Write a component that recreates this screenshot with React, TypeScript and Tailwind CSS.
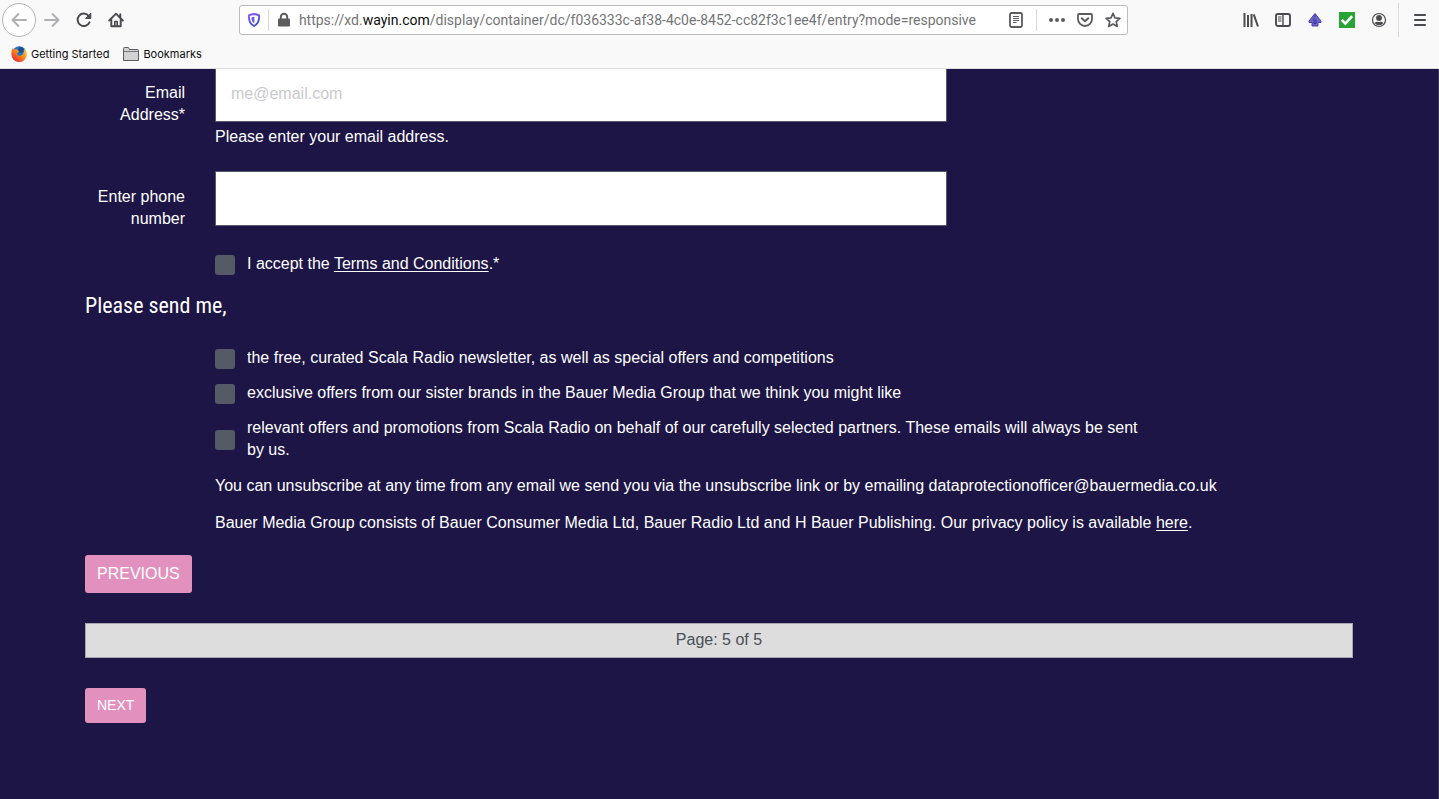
import type { ReactNode } from "react";

function ToolButton({ label, children }: { label: string; children: ReactNode }) {
  return (
    <button type="button" aria-label={label} className="flex h-8 w-8 shrink-0 items-center justify-center text-[#4a4a4f]">
      {children}
    </button>
  );
}

const icon = {
  width: 16,
  height: 16,
  viewBox: "0 0 16 16",
  fill: "none",
  stroke: "currentColor",
  strokeWidth: 2,
  strokeLinecap: "round" as const,
  strokeLinejoin: "round" as const,
  "aria-hidden": true,
};

function BrowserToolbar() {
  return (
    <div className="flex h-10 items-center">
      <nav aria-label="Navigation" className="flex items-center pl-0.5">
        <button
          type="button"
          aria-label="Back"
          className="flex h-[34px] w-[34px] items-center justify-center rounded-full border border-[#b4b4b4] bg-white text-[#b0b0b2]"
        >
          <svg {...icon}><path d="M15 8H1.5M7.5 2l-6 6 6 6" /></svg>
        </button>
        <button type="button" aria-label="Forward" className="flex h-8 w-8 items-center justify-center text-[#b0b0b2]">
          <svg {...icon}><path d="M1 8h13.5M8.500 2l6 6-6 6" /></svg>
        </button>
        <ToolButton label="Reload">
          <svg {...icon}>
            <path d="M13.500 10.300A6.200 6.200 0 1 1 12.600 3.800" />
            <path d="M14.800 1.500v5H10z" fill="currentColor" strokeWidth="1" />
          </svg>
        </ToolButton>
        <ToolButton label="Home">
          <svg {...icon}>
            <path d="M1.200 8.500L8 1.700l6.800 6.800M3.300 7v7.200h9.400V7M12.300 2.300v3" strokeWidth="1.900" />
            <path d="M6.800 14V9.500h2.400V14" strokeWidth="1.600" />
          </svg>
        </ToolButton>
      </nav>
      <div className="flex-1" />
      <div className="flex h-[30px] flex-[8.300] items-center rounded-[3px] border border-[#bcbcbd] bg-white text-[#5c5c5f]">
        <button type="button" aria-label="Tracking protection" className="flex w-7 shrink-0 items-center justify-center">
          <svg width="14" height="14" viewBox="0 0 14 14" fill="none" aria-hidden="true">
            <defs>
              <linearGradient id="shield" x1="1" y1="1" x2="9" y2="14" gradientUnits="userSpaceOnUse">
                <stop stopColor="#9059ff" />
                <stop offset="1" stopColor="#2f4fd0" />
              </linearGradient>
            </defs>
            <path d="M7 1q3 .3 5.100 1.400c.3 5.500-1 8.800-5.100 10.600C2.900 11.200 1.600 7.900 1.900 2.400 3.500 1.500 5 1.200 7 1z" stroke="url(#shield)" strokeWidth="1.900" strokeLinejoin="round" />
            <path d="M7.300 3.700v6.600C5.200 9 4.500 7.300 4.500 4.300z" fill="url(#shield)" />
          </svg>
        </button>
        <span className="h-[22px] w-px shrink-0 bg-[#d7d7db]" />
        <button type="button" aria-label="Connection secure" className="flex w-[30px] shrink-0 items-center justify-center">
          <svg width="14" height="16" viewBox="0 0 14 16" aria-hidden="true">
            <rect x="1" y="6.500" width="12" height="8" rx="1.300" fill="#5c5c5f" />
            <path d="M3.800 7.500V5a3.200 3.200 0 0 1 6.400 0v2.500" fill="none" stroke="#5c5c5f" strokeWidth="2" />
          </svg>
        </button>
        <div className="min-w-0 flex-1 truncate font-[Roboto,sans-serif] text-[14px] leading-5 text-[#747476]">
          https://xd.<span className="text-[#0c0c0d]">wayin.com</span>
          /display/container/dc/f036333c-af38-4c0e-8452-cc82f3c1ee4f/entry?mode=responsive
        </div>
        <button type="button" aria-label="Reader view" className="flex w-8 shrink-0 items-center justify-center">
          <svg {...icon}>
            <rect x="2" y="1" width="12" height="14" rx="1.500" strokeWidth="1.800" />
            <path d="M5 4.500h6M5 6.500h6M5 8.500h6M5 10.500h3.500" strokeWidth="1" strokeLinecap="butt" />
          </svg>
        </button>
        <span className="ml-1 mr-1.5 h-[22px] w-px shrink-0 bg-[#d7d7db]" />
        <button type="button" aria-label="Page actions" className="flex w-7 shrink-0 items-center justify-center">
          <svg width="16" height="16" viewBox="0 0 16 16" fill="currentColor" aria-hidden="true">
            <circle cx="2" cy="8" r="2" /><circle cx="8" cy="8" r="2" /><circle cx="14" cy="8" r="2" />
          </svg>
        </button>
        <button type="button" aria-label="Save to Pocket" className="flex w-7 shrink-0 items-center justify-center">
          <svg {...icon}>
            <path d="M2 2h12a1 1 0 0 1 1 1v4a7 7 0 0 1-14 0V3a1 1 0 0 1 1-1z" strokeWidth="1.800" />
            <path d="M4.700 6.300L8 9.300l3.300-3" />
          </svg>
        </button>
        <button type="button" aria-label="Bookmark this page" className="flex w-7 shrink-0 items-center justify-center">
          <svg {...icon}>
            <path d="M8 1.300l2 4.500 4.900.5-3.700 3.300 1.100 4.900L8 12l-4.300 2.500 1.100-4.900L1.100 6.300 6 5.800z" strokeWidth="1.700" />
          </svg>
        </button>
      </div>
      <div className="flex-1" />
      <div className="flex items-center">
        <ToolButton label="Library">
          <svg {...icon} strokeLinecap="butt">
            <path d="M1.500 1v14M5 3v12M8.500 2v13M10.700 2.400L15 14.500" />
          </svg>
        </ToolButton>
        <ToolButton label="Sidebars">
          <svg {...icon} strokeLinecap="butt">
            <rect x="1" y="2" width="14" height="12" rx="2" strokeWidth="1.900" />
            <path d="M8 2v12" strokeWidth="1.400" />
            <path d="M3 5h3.500M3 7h3.500M3 9h3.500" strokeWidth="1" />
          </svg>
        </ToolButton>
        <ToolButton label="Upload extension">
          <svg width="16" height="16" viewBox="0 0 16 16" aria-hidden="true">
            <path d="M8 1.500l6 7.500v1.500h-3v3.500H5v-3.500H2V9z" fill="#6d68c8" stroke="#4840b0" strokeWidth="1" strokeLinejoin="round" />
            <path d="M7 6v5.500h2V7.500M8 3v2" fill="none" stroke="#37309a" strokeWidth="1" />
          </svg>
        </ToolButton>
        <ToolButton label="Checker extension">
          <svg width="16" height="16" viewBox="0 0 16 16" aria-hidden="true">
            <path fill="#27a534" d="M0 0h16v16H0z" />
            <path d="M2.700 7.800l3.700 3.900 6.700-7.500" fill="none" stroke="#fff" strokeWidth="2.600" />
          </svg>
        </ToolButton>
        <ToolButton label="Account">
          <svg width="16" height="16" viewBox="0 0 16 16" aria-hidden="true">
            <circle cx="8" cy="8" r="6.500" fill="none" stroke="#4a4a4f" strokeWidth="1.200" />
            <circle cx="8" cy="6" r="2.900" fill="#4a4a4f" />
            <path d="M3.500 11c1.200-.9 2-1.300 2.800-1.200a5 5 0 0 0 3.400 0c.8-.1 1.600.3 2.800 1.200a5.500 5.500 0 0 1-9 0z" fill="#4a4a4f" />
          </svg>
        </ToolButton>
        <span className="ml-[3px] mr-[5px] h-[34px] w-px bg-[#dcdcde]" />
        <ToolButton label="Menu">
          <svg {...icon}><path d="M3 3h10M3 8h10M3 13h10" /></svg>
        </ToolButton>
        <span className="w-[3px]" />
      </div>
    </div>
  );
}

function BookmarksBar() {
  return (
    <div className="flex h-7 items-center gap-3.5 pl-[11px] font-[Inter,sans-serif] text-[11px] leading-4 text-[#0c0c0d]">
      <a href="#getting-started" className="flex items-center gap-1">
        <svg width="16" height="16" viewBox="0 0 16 16" aria-hidden="true">
          <defs>
            <linearGradient id="fox" x1="14" y1="1" x2="3" y2="15" gradientUnits="userSpaceOnUse">
              <stop stopColor="#ffd93b" />
              <stop offset=".5" stopColor="#ff8a16" />
              <stop offset="1" stopColor="#e3243d" />
            </linearGradient>
          </defs>
          <circle cx="8.300" cy="7" r="6.800" fill="#2377c8" />
          <path d="M8 1.200c3-1 5.500.8 5.500 4.300L9 7 7 4z" fill="#1a4f91" />
          <path d="M1.600 2l1.600 1.800C4.500 3 5.700 3.200 6.400 3.700L8 5.500 6.200 7c-.3 2.200 1.600 3.400 3.500 2.600 2.700-.8 3.600-3 2.900-5.700l.9.8c0-1-.3-1.700-.8-2.500 2 1.400 3.200 3.700 3.100 6.300A7.700 7.700 0 0 1 .4 8.200C.2 6.300.6 4 1.600 2z" fill="url(#fox)" />
        </svg>
        Getting Started
      </a>
      <button type="button" className="flex items-center gap-1">
        <svg width="16" height="14" viewBox="0 0 16 14" aria-hidden="true">
          <path d="M.5 13.500V1.500q0-1 1-1H5q.8 0 1 1l.3 1h8.200q1 0 1 1v10z" fill="#d2d2d3" stroke="#5a5a5c" />
          <path d="M1 4.500h14" stroke="#77777a" />
        </svg>
        Bookmarks
      </button>
    </div>
  );
}

function Check({ id, children }: { id: string; children: ReactNode }) {
  return (
    <div className="flex max-w-[930px] items-center gap-3">
      <input id={id} type="checkbox" className="mt-0.5 h-5 w-5 shrink-0 appearance-none rounded-[3px] bg-[#545b67] checked:bg-[#e291bf]" />
      <label htmlFor={id}>{children}</label>
    </div>
  );
}

const row = "grid grid-cols-[100px_minmax(0,1fr)] gap-x-[30px]";
const field = "block w-full max-w-[732px] border-[#545b67] bg-white px-[15px] text-base text-[#222] placeholder:text-[#c9cacd]";

export default function App() {
  return (
    <div className="flex min-h-screen flex-col bg-[#1c1545] font-['Liberation_Sans',Arial,sans-serif] text-base leading-[22px] text-white">
      <header className="border-b border-[#dedee0] bg-[#f9f9fa]">
        <BrowserToolbar />
        <BookmarksBar />
      </header>
      <main className="flex-1 border-r border-[#3b3459] pb-16 pl-[85px] pr-[85px]">
        <form onSubmit={(e) => e.preventDefault()}>
          <div className={row}>
            <label htmlFor="email" className="pt-[13px] text-right">Email Address*</label>
            <div>
              <input id="email" type="email" placeholder="me@email.com" className={`${field} h-[53px] border-x border-b pb-0.5`} />
              <p className="pt-1">Please enter your email address.</p>
            </div>
          </div>
          <div className={`${row} mt-[23px]`}>
            <label htmlFor="phone" className="pt-[15px] text-right">Enter phone number</label>
            <input id="phone" type="tel" className={`${field} h-[55px] border`} />
          </div>
          <div className="mt-[23px] pl-[130px]">
            <Check id="terms">
              I accept the <a href="#terms" className="underline underline-offset-2">Terms and Conditions</a>.*
            </Check>
          </div>
          <h2 className="mt-[17px] font-['Roboto_Condensed','Liberation_Sans_Narrow',Roboto,sans-serif] text-[22px] font-normal leading-7">Please send me,</h2>
          <div className="mt-[27px] flex flex-col gap-[13px] pl-[130px]">
            <Check id="newsletter">the free, curated Scala Radio newsletter, as well as special offers and competitions</Check>
            <Check id="brands">exclusive offers from our sister brands in the Bauer Media Group that we think you might like</Check>
            <Check id="partners">
              relevant offers and promotions from Scala Radio on behalf of our carefully selected partners. These emails will always be sent by us.
            </Check>
          </div>
          <div className="mt-[14px] flex flex-col gap-[15px] pl-[130px]">
            <p>You can unsubscribe at any time from any email we send you via the unsubscribe link or by emailing dataprotectionofficer@bauermedia.co.uk</p>
            <p>
              Bauer Media Group consists of Bauer Consumer Media Ltd, Bauer Radio Ltd and H Bauer Publishing. Our privacy policy is available{" "}
              <a href="#privacy" className="underline underline-offset-2">here</a>.
            </p>
          </div>
          <button type="button" className="mt-[21px] block h-[38px] rounded-[3px] bg-[#e291bf] px-3">PREVIOUS</button>
          <div className="mt-[30px] flex h-[35px] items-center justify-center border border-[#a6a7b0] bg-[#dddddd] pb-0.5 text-[#495057]">Page: 5 of 5</div>
          <button type="submit" className="mt-[30px] block h-[35px] rounded-[3px] bg-[#e291bf] px-3 pb-0.5 text-sm">NEXT</button>
        </form>
      </main>
    </div>
  );
}
